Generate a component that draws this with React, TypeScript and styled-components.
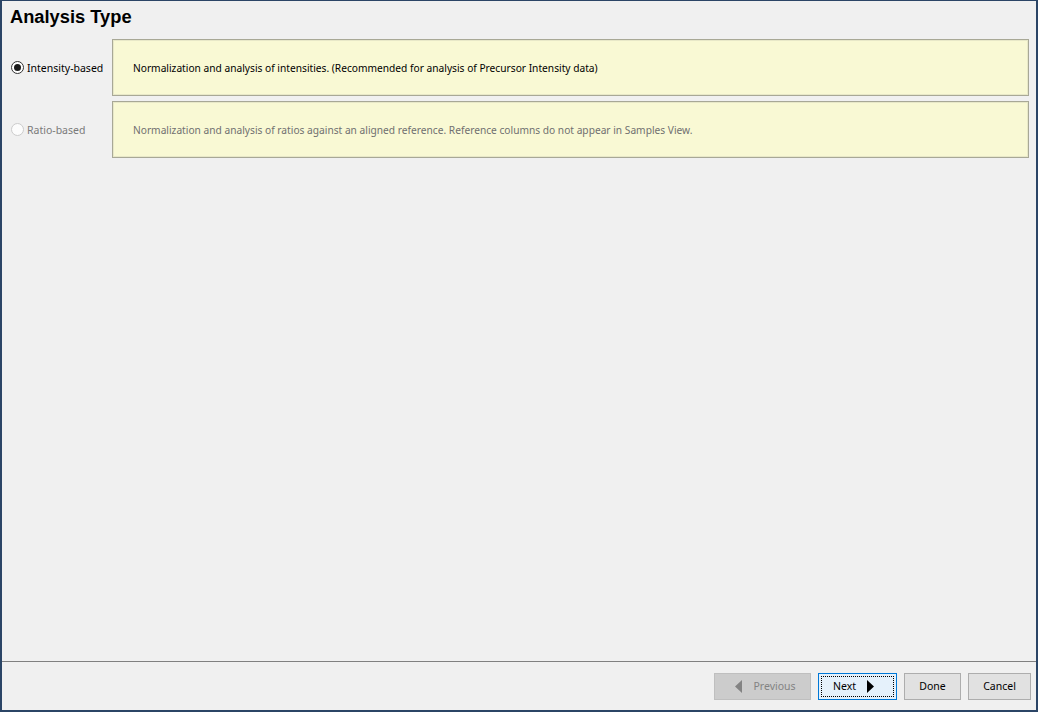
import React from "react";
import styled, { createGlobalStyle } from "styled-components";

const Global = createGlobalStyle`
  html, body { margin: 0; padding: 0; }
  body { font-family: Tahoma, "DejaVu Sans", "Liberation Sans", sans-serif; }
  * { box-sizing: border-box; }
`;

const Frame = styled.div`
  width: 1038px;
  height: 712px;
  border-style: solid;
  border-color: #2b4566;
  border-width: 1px 2px 2px 2px;
  background: #f0f0f0;
  display: flex;
  flex-direction: column;
`;

const Title = styled.h1`
  margin: 0;
  padding: 5px 0 0 8px;
  height: 38px;
  font-family: "Liberation Sans", Arial, sans-serif;
  font-weight: bold;
  font-size: 18.3px;
  color: #000;
`;

const Content = styled.div`
  flex: 1;
  display: flex;
  flex-direction: column;
  gap: 5px;
  padding-right: 7px;
`;

const OptionRow = styled.div`
  display: flex;
  height: 57px;
`;

const RadioCell = styled.label<{ $disabled?: boolean }>`
  width: 110px;
  display: flex;
  align-items: center;
  padding-left: 9px;
  gap: 3px;
  font-family: "Noto Sans", "DejaVu Sans", sans-serif;
  font-size: 10.5px;
  color: ${(p) => (p.$disabled ? "#7a7a7a" : "#000")};
`;

const RadioDot = styled.span<{ $checked?: boolean; $disabled?: boolean }>`
  width: 13px;
  height: 13px;
  border-radius: 50%;
  border: 1px solid ${(p) => (p.$disabled ? "#cccccc" : "#333333")};
  background: ${(p) => (p.$disabled ? "#fcfcfc" : "#ffffff")};
  display: flex;
  align-items: center;
  justify-content: center;
  flex-shrink: 0;
  &::after {
    content: "";
    display: ${(p) => (p.$checked ? "block" : "none")};
    width: 7px;
    height: 7px;
    border-radius: 50%;
    background: #1a1a1a;
  }
`;

const Description = styled.div<{ $disabled?: boolean }>`
  flex: 1;
  background: #f9f9d4;
  border: 1px solid #a8a896;
  box-shadow: inset 0 0 0 1px #e8e8c8;
  display: flex;
  align-items: center;
  padding-left: 20px;
  font-family: "Noto Sans", "DejaVu Sans", sans-serif;
  font-size: 10.2px;
  color: ${(p) => (p.$disabled ? "#707070" : "#000")};
`;

const Footer = styled.div`
  height: 49px;
  border-top: 1px solid #808080;
  display: flex;
  justify-content: flex-end;
  align-items: flex-start;
  gap: 7px;
  padding: 11px 5px 0 0;
`;

const Button = styled.button<{ $w: number; $variant?: "disabled" | "focused"; $shift?: number }>`
  width: ${(p) => p.$w}px;
  height: 27px;
  position: relative;
  display: flex;
  align-items: center;
  justify-content: center;
  gap: 11px;
  font-family: "Noto Sans", "DejaVu Sans", sans-serif;
  font-size: 10.5px;
  line-height: 1;
  padding: 0 ${(p) => (p.$shift && p.$shift < 0 ? -p.$shift * 2 : 0)}px 1px
    ${(p) => (p.$shift && p.$shift > 0 ? p.$shift * 2 : 0)}px;
  background: ${(p) =>
    p.$variant === "disabled" ? "#cccccc" : p.$variant === "focused" ? "#e5f1fb" : "#e1e1e1"};
  border: 1px solid
    ${(p) =>
      p.$variant === "disabled" ? "#bfbfbf" : p.$variant === "focused" ? "#0078d7" : "#adadad"};
  color: ${(p) => (p.$variant === "disabled" ? "#838383" : "#000")};
  ${(p) =>
    p.$variant === "focused"
      ? `&::after { content: ""; position: absolute; inset: 2px; border: 1px dotted #000; pointer-events: none; }`
      : ""}
`;

const Arrow = ({ dir, color }: { dir: "left" | "right"; color: string }) => (
  <svg width="7" height="13" viewBox="0 0 7 13">
    {dir === "left" ? (
      <polygon points="7,0 0,6.5 7,13" fill={color} />
    ) : (
      <polygon points="0,0 7,6.5 0,13" fill={color} />
    )}
  </svg>
);

export default function App() {
  return (
    <>
      <Global />
      <Frame>
        <Title>Analysis Type</Title>
        <Content>
          <OptionRow>
            <RadioCell>
              <RadioDot $checked />
              Intensity-based
            </RadioCell>
            <Description>
              Normalization and analysis of intensities. (Recommended for analysis of Precursor Intensity data)
            </Description>
          </OptionRow>
          <OptionRow>
            <RadioCell $disabled>
              <RadioDot $disabled />
              Ratio-based
            </RadioCell>
            <Description $disabled>
              Normalization and analysis of ratios against an aligned reference. Reference columns do not appear in Samples View.
            </Description>
          </OptionRow>
        </Content>
        <Footer>
          <Button $w={97} $variant="disabled" $shift={3}>
            <Arrow dir="left" color="#838383" />
            Previous
          </Button>
          <Button $w={79} $variant="focused" $shift={-4}>
            Next
            <Arrow dir="right" color="#000" />
          </Button>
          <Button $w={57}>Done</Button>
          <Button $w={63}>Cancel</Button>
        </Footer>
      </Frame>
    </>
  );
}
